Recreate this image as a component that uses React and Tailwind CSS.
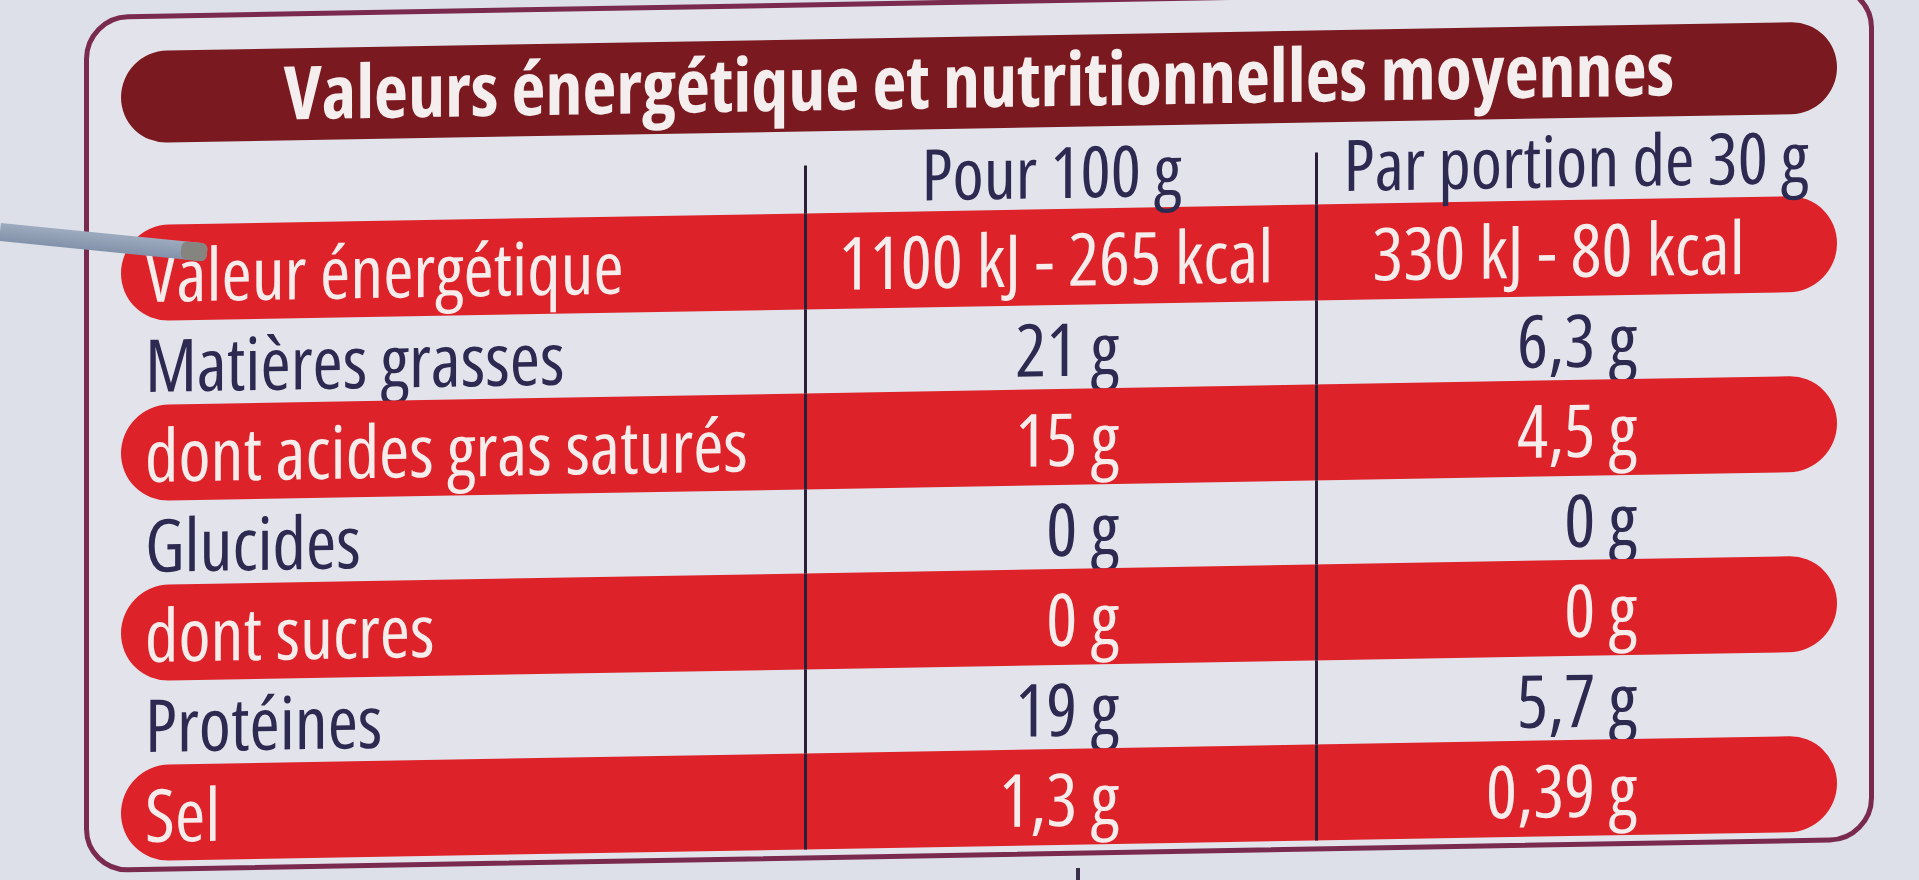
const rows = [
  { label: 'Valeur énergétique', a: '1100 kJ - 265 kcal', b: '330 kJ - 80 kcal', red: true, energy: true },
  { label: 'Matières grasses', a: '21 g', b: '6,3 g' },
  { label: 'dont acides gras saturés', a: '15 g', b: '4,5 g', red: true },
  { label: 'Glucides', a: '0 g', b: '0 g' },
  { label: 'dont sucres', a: '0 g', b: '0 g', red: true },
  { label: 'Protéines', a: '19 g', b: '5,7 g' },
  { label: 'Sel', a: '1,3 g', b: '0,39 g', red: true },
];

function Row({ row }) {
  const text = row.red ? 'text-[#f6ecec]' : 'text-[#2d2a52]';
  const bg = row.red ? 'bg-[#dd2329] h-[96px]' : 'h-[84px]';
  return (
    <div className={`grid grid-cols-[683px_511px_1fr] rounded-full ${bg} ${text}`}>
      <div className="flex items-center pl-[24px]">{row.label}</div>
      <div
        className={`flex items-center border-l-[3px] border-[#2a1f36] ${
          row.energy ? 'justify-center pr-[10px]' : 'justify-end pr-[196px]'
        }`}
      >
        {row.a}
      </div>
      <div
        className={`flex items-center border-l-[3px] border-[#2a1f36] ${
          row.energy ? 'justify-center pr-[38px]' : 'justify-end pr-[200px]'
        }`}
      >
        {row.b}
      </div>
    </div>
  );
}

export default function App() {
  return (
    <div className="relative w-[1919px] h-[880px] overflow-hidden bg-[#dde0e8] font-['Open_Sans',sans-serif] font-medium font-stretch-[75%]">
      <div className="ml-[84px] mt-[15px] w-[1790px] h-[858px] -skew-y-1 origin-top-left rounded-[44px] border-[5px] border-[#7a2a4e] bg-[#e3e4eb] px-[32px] pt-[32px]">
        <div className="flex h-[92px] items-center justify-center rounded-full bg-[#7a1a20] pb-[6px] text-[74px] font-bold leading-none text-[#f4eeee] font-stretch-[82%]">
          Valeurs énergétique et nutritionnelles moyennes
        </div>

        <div className="grid h-[82px] grid-cols-[683px_511px_1fr] text-[71px] leading-none text-[#2d2a52]">
          <div />
          <div className="relative flex items-start justify-center pr-[16px] pt-[8px] before:absolute before:left-0 before:top-[34px] before:bottom-0 before:w-[3px] before:bg-[#2a1f36]">
            Pour 100 g
          </div>
          <div className="relative flex items-start justify-center pt-[6px] before:absolute before:left-0 before:top-[30px] before:bottom-0 before:w-[3px] before:bg-[#2a1f36]">
            Par portion de 30 g
          </div>
        </div>

        <div className="flex flex-col text-[73px] leading-none">
          {rows.map((r) => (
            <Row key={r.label} row={r} />
          ))}
        </div>
      </div>

      <div className="absolute left-0 top-[223px] h-[18px] w-[208px] origin-left rotate-[5.7deg] rounded-r-md bg-gradient-to-b from-[#9eabbf] to-[#8292aa]">
        <div className="ml-auto h-full w-[26px] rounded-md bg-[#85847f]" />
      </div>
      <div className="absolute left-[1076px] top-[868px] h-[12px] w-[4px] bg-[#3a3048]" />
    </div>
  );
}
